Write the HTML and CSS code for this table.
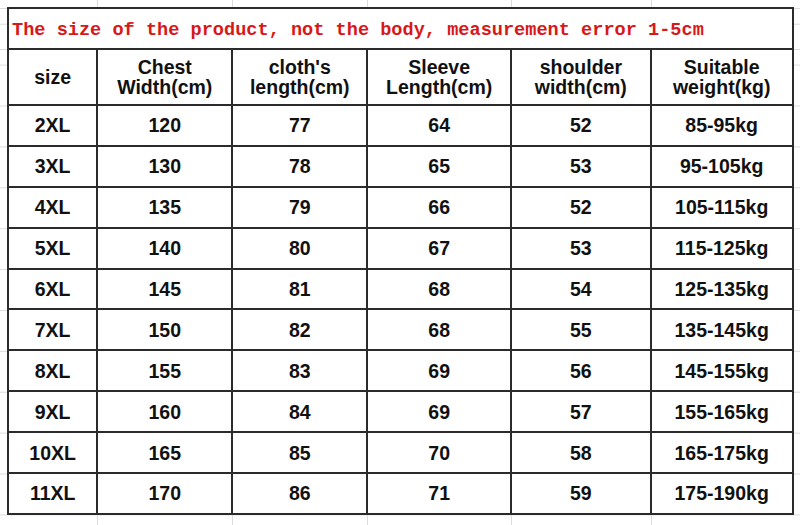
FILE: index.html
```html
<!DOCTYPE html>
<html>
<head>
<meta charset="utf-8">
<link rel="stylesheet" href="styles.css">
</head>
<body>
<div class="sheet">
  <div class="chart">
    <div class="title">The size of the product, not the body, measurement error 1-5cm</div>
    <div class="cell head">size</div>
    <div class="cell head">Chest<br>Width(cm)</div>
    <div class="cell head">cloth's<br>length(cm)</div>
    <div class="cell head">Sleeve<br>Length(cm)</div>
    <div class="cell head">shoulder<br>width(cm)</div>
    <div class="cell head">Suitable<br>weight(kg)</div>

    <div class="cell">2XL</div><div class="cell">120</div><div class="cell">77</div><div class="cell">64</div><div class="cell">52</div><div class="cell">85-95kg</div>
    <div class="cell">3XL</div><div class="cell">130</div><div class="cell">78</div><div class="cell">65</div><div class="cell">53</div><div class="cell">95-105kg</div>
    <div class="cell">4XL</div><div class="cell">135</div><div class="cell">79</div><div class="cell">66</div><div class="cell">52</div><div class="cell">105-115kg</div>
    <div class="cell">5XL</div><div class="cell">140</div><div class="cell">80</div><div class="cell">67</div><div class="cell">53</div><div class="cell">115-125kg</div>
    <div class="cell">6XL</div><div class="cell">145</div><div class="cell">81</div><div class="cell">68</div><div class="cell">54</div><div class="cell">125-135kg</div>
    <div class="cell">7XL</div><div class="cell">150</div><div class="cell">82</div><div class="cell">68</div><div class="cell">55</div><div class="cell">135-145kg</div>
    <div class="cell">8XL</div><div class="cell">155</div><div class="cell">83</div><div class="cell">69</div><div class="cell">56</div><div class="cell">145-155kg</div>
    <div class="cell">9XL</div><div class="cell">160</div><div class="cell">84</div><div class="cell">69</div><div class="cell">57</div><div class="cell">155-165kg</div>
    <div class="cell">10XL</div><div class="cell">165</div><div class="cell">85</div><div class="cell">70</div><div class="cell">58</div><div class="cell">165-175kg</div>
    <div class="cell">11XL</div><div class="cell">170</div><div class="cell">86</div><div class="cell">71</div><div class="cell">59</div><div class="cell">175-190kg</div>
  </div>
</div>
</body>
</html>
```
FILE: styles.css
```css
html, body {
  margin: 0;
  padding: 0;
}
body {
  width: 800px;
  height: 525px;
  overflow: hidden;
  background-color: #ffffff;
  background-image:
    linear-gradient(#dcdcdc, #dcdcdc),
    linear-gradient(#dcdcdc, #dcdcdc),
    linear-gradient(#dcdcdc, #dcdcdc),
    linear-gradient(#dcdcdc, #dcdcdc),
    linear-gradient(#dcdcdc, #dcdcdc),
    linear-gradient(#dcdcdc, #dcdcdc),
    linear-gradient(#dcdcdc, #dcdcdc),
    linear-gradient(to bottom, #dcdcdc 0 1px, transparent 1px);
  background-repeat: no-repeat, no-repeat, no-repeat, no-repeat, no-repeat, no-repeat, no-repeat, repeat-y;
  background-size: 1px 100%, 1px 100%, 1px 100%, 1px 100%, 1px 100%, 100% 1px, 100% 1px, 100% 40.9px;
  background-position: 97px 0, 232px 0, 367px 0, 511px 0, 651px 0, 0 8px, 0 49px, 0 105.5px;
  font-family: "Liberation Sans", Arial, sans-serif;
}
.sheet {
  padding: 7px 0 0 7px;
}
.chart {
  display: grid;
  grid-template-columns: 87.3px 133px 133px 141.7px 137.7px 140px;
  grid-template-rows: 39px 54px repeat(10, 38.9px);
  gap: 2px;
  width: max-content;
  border: 2px solid #2b2b2b;
  background: #2b2b2b;
}
.title {
  grid-column: 1 / -1;
  background: #ffffff;
  display: flex;
  align-items: center;
  padding: 3px 0 0 3px;
  font-family: "Liberation Mono", "Courier New", monospace;
  font-size: 18.6px;
  font-weight: bold;
  color: #d81818;
  white-space: nowrap;
}
.cell {
  background: #ffffff;
  display: flex;
  align-items: center;
  justify-content: center;
  text-align: center;
  font-weight: bold;
  font-size: 19.5px;
  line-height: 20px;
  color: #111111;
}
```
